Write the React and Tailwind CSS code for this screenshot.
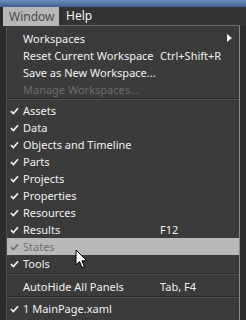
import React from 'react';

const Check = ({ dim }) => (
  <svg width="9" height="8" viewBox="0 0 9 8" className="shrink-0">
    <path d="M1 4.2 L3.4 6.6 L8 1.2" fill="none" stroke={dim ? '#6f6f6f' : '#f2f2f2'} strokeWidth="1.7" />
  </svg>
);

function Item({ label, shortcut, checked, disabled, active, submenu }) {
  return (
    <div className={`relative flex items-center h-[17px] ${active ? 'bg-[#b9b9b9]' : ''}`}>
      <div className="w-[16px] pl-[3px] flex items-center">{checked && <Check dim={active} />}</div>
      <span
        className={`w-[137px] whitespace-nowrap ${
          disabled ? 'text-[#6b6b6b]' : active ? 'text-[#707070]' : 'text-[#f2f2f2]'
        }`}
      >
        {label}
      </span>
      {shortcut && <span className="whitespace-nowrap text-[#f2f2f2]">{shortcut}</span>}
      {submenu && (
        <svg width="5" height="8" viewBox="0 0 5 8" className="absolute right-[7px] top-[4px]">
          <path d="M0 0 L5 4 L0 8 Z" fill="#f2f2f2" />
        </svg>
      )}
    </div>
  );
}

const Sep = ({ className }) => (
  <div className={`flex flex-col ${className}`}>
    <div className="h-px bg-[#2a2a2a]" />
    <div className="h-px bg-[#4d4d4d]" />
  </div>
);

export default function App() {
  return (
    <div className="w-[246px] h-[320px] overflow-hidden bg-[#2f2f2f] text-[11px] leading-none" style={{ fontFamily: '"Noto Sans", sans-serif' }}>
      <div className="h-[7px] bg-gradient-to-b from-[#6d8fbb] to-[#3f5f8a]" />
      <div className="flex h-[19px] bg-[#333333]">
        <div className="w-[3px] bg-[#2a2a2a]" />
        <div className="w-[56px] bg-[#b7b7b7] text-[#4a4a4a] flex items-center pl-[6px] text-[12px]">Window</div>
        <div className="flex items-center pl-[7px] text-[#f2f2f2] text-[12px] border-b border-[#6a6a6a] flex-1 mr-[6px]">Help</div>
      </div>
      <div className="flex">
        <div className="w-[7px] bg-[#2c2c2c] border-r border-[#4a4a4a]" />
        <div className="w-[233px] h-[294px] bg-[#3a3a3a] border-r border-[#8a8a8a] pt-[4px] relative">
          <Item label="Workspaces" submenu />
          <Item label="Reset Current Workspace" shortcut="Ctrl+Shift+R" />
          <Item label="Save as New Workspace..." />
          <Item label="Manage Workspaces..." disabled />
          <Sep className="mb-[2px]" />
          <Item label="Assets" checked />
          <Item label="Data" checked />
          <Item label="Objects and Timeline" checked />
          <Item label="Parts" checked />
          <Item label="Projects" checked />
          <Item label="Properties" checked />
          <Item label="Resources" checked />
          <Item label="Results" checked shortcut="F12" />
          <Item label="States" checked active />
          <Item label="Tools" checked />
          <Sep className="mt-[1px] mb-[3px]" />
          <Item label="AutoHide All Panels" shortcut="Tab, F4" />
          <Sep className="mt-[1px] mb-[2px]" />
          <Item label="1 MainPage.xaml" checked />
          <svg width="13" height="20" viewBox="0 0 13 20" className="absolute left-[68px] top-[223px]">
            <path d="M1 1 L1 16 L4.5 12.5 L7 18.5 L9.3 17.5 L6.9 11.8 L11.8 11.8 Z" fill="#ffffff" stroke="#000000" strokeWidth="1" strokeLinejoin="round" />
          </svg>
        </div>
        <div className="flex-1 bg-[#2a2a2a]" />
      </div>
    </div>
  );
}
